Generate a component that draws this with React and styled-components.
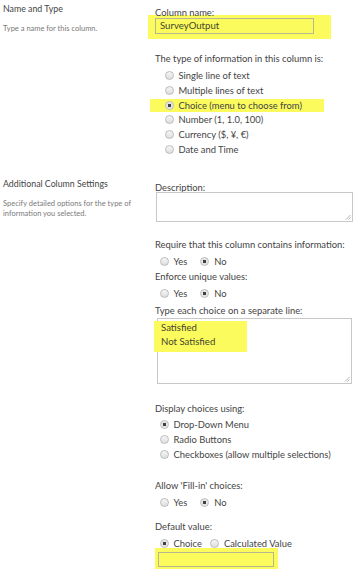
import React from 'react';
import styled, { createGlobalStyle } from 'styled-components';

const GlobalStyle = createGlobalStyle`
  html, body {
    margin: 0;
    padding: 0;
    background: #ffffff;
  }
  body {
    font-family: 'Lato', 'Liberation Sans', sans-serif;
    color: #444;
  }
`;

const Page = styled.div`
  width: 361px;
  height: 583px;
  padding-top: 3px;
  box-sizing: border-box;
  overflow: hidden;
`;

const Section = styled.div`
  display: grid;
  grid-template-columns: 155px 1fr;
  margin-top: ${(p) => p.$gap || 0}px;
`;

const Aside = styled.div`
  padding-left: 3px;
`;

const AsideTitle = styled.div`
  font-size: 8.8px;
  line-height: 11px;
  color: #444;
`;

const AsideText = styled.div`
  margin-top: 10px;
  font-size: 7.5px;
  line-height: 10px;
  color: #7a7a7a;
  width: 140px;
`;

const Fields = styled.div`
  padding-top: 4px;
  font-size: 9.4px;
`;

const Label = styled.div`
  line-height: ${(p) => p.$line || 16}px;
  margin-top: ${(p) => p.$top || 0}px;
  white-space: nowrap;
`;

const Marker = styled.div`
  background: #fbfb5e;
  width: fit-content;
`;

const NameMarker = styled(Marker)`
  margin: -3px 0 -5px -7px;
  padding: 3px 17px 5px 7px;
`;

const TextBox = styled.div`
  box-sizing: border-box;
  width: ${(p) => p.$w}px;
  height: ${(p) => p.$h}px;
  border: 1px solid #b8b890;
  padding: 0 4px;
  font-size: 9.6px;
  line-height: ${(p) => p.$h - 2}px;
  color: #45452c;
`;

const RadioList = styled.div`
  margin-top: ${(p) => p.$top || 0}px;
  padding-left: ${(p) => p.$indent}px;
`;

const RadioRow = styled.div`
  display: flex;
  align-items: center;
  height: ${(p) => p.$h}px;
  white-space: nowrap;
`;

const ChoiceMarker = styled(Marker)`
  display: flex;
  align-items: center;
  height: 13px;
  margin: 1px 0 1px -14.5px;
  padding: 0 22px 0 14.5px;
  white-space: nowrap;
`;

const InlineRow = styled.div`
  display: flex;
  align-items: center;
  height: 16px;
  padding-left: 4.5px;
  white-space: nowrap;
`;

const Option = styled.span`
  display: inline-flex;
  align-items: center;
  margin-right: ${(p) => p.$gap || 13}px;
`;

const Radio = styled.span`
  display: inline-block;
  box-sizing: border-box;
  width: 9px;
  height: 9px;
  border-radius: 50%;
  border: 1px solid #bcbcbc;
  background: ${(p) =>
    p.$on
      ? 'radial-gradient(circle, #404040 0 1.5px, #e2e2e2 2px, #f4f4f4 100%)'
      : 'linear-gradient(#f6f6f6, #dedede)'};
  margin-right: 5px;
  flex-shrink: 0;
`;

const Area = styled.div`
  position: relative;
  box-sizing: border-box;
  width: ${(p) => p.$w}px;
  height: ${(p) => p.$h}px;
  margin-top: ${(p) => p.$top || 0}px;
  margin-left: ${(p) => p.$left || 0}px;
  border: 1px solid #c8c8c8;
  background: #fff;
`;

const Grip = styled.svg`
  position: absolute;
  right: 1px;
  bottom: 1px;
  width: 6px;
  height: 6px;
`;

const AreaMarker = styled(Marker)`
  margin: 2px 0 0 -4px;
  padding: 0 0 3px 7px;
  width: 86px;
  font-size: 9.6px;
  line-height: 14px;
  color: #45452c;
`;

const DefaultMarker = styled(Marker)`
  margin: -3px 0 0 0;
  padding: 4px 4px 2px 3px;
`;

const ResizeGrip = () => (
  <Grip viewBox="0 0 6 6">
    <path d="M5.5 1 L1 5.5 M5.5 3.5 L3.5 5.5" stroke="#a0a0a0" strokeWidth="0.8" fill="none" />
  </Grip>
);

const App = () => (
  <>
    <GlobalStyle />
    <Page>
      <Section>
        <Aside>
          <AsideTitle>Name and Type</AsideTitle>
          <AsideText>Type a name for this column.</AsideText>
        </Aside>
        <Fields>
          <Label $line={11}>Column name:</Label>
          <NameMarker>
            <TextBox $w={159} $h={16}>SurveyOutput</TextBox>
          </NameMarker>
          <Label $line={11} $top={19}>The type of information in this column is:</Label>
          <RadioList $top={4.5} $indent={9.5}>
            <RadioRow $h={14.6}><Radio />Single line of text</RadioRow>
            <RadioRow $h={14.6}><Radio />Multiple lines of text</RadioRow>
            <ChoiceMarker><Radio $on />Choice (menu to choose from)</ChoiceMarker>
            <RadioRow $h={14.6}><Radio />Number (1, 1.0, 100)</RadioRow>
            <RadioRow $h={14.6}><Radio />Currency ($, ¥, €)</RadioRow>
            <RadioRow $h={14.6}><Radio />Date and Time</RadioRow>
          </RadioList>
        </Fields>
      </Section>

      <Section $gap={21.4}>
        <Aside>
          <AsideTitle>Additional Column Settings</AsideTitle>
          <AsideText>Specify detailed options for the type of information you selected.</AsideText>
        </Aside>
        <Fields>
          <Label $line={11}>Description:</Label>
          <Area $w={197} $h={30} $top={-0.5} $left={1}>
            <ResizeGrip />
          </Area>
          <Label $top={15}>Require that this column contains information:</Label>
          <InlineRow>
            <Option><Radio />Yes</Option>
            <Option><Radio $on />No</Option>
          </InlineRow>
          <Label>Enforce unique values:</Label>
          <InlineRow>
            <Option><Radio />Yes</Option>
            <Option><Radio $on />No</Option>
          </InlineRow>
          <Label $top={2}>Type each choice on a separate line:</Label>
          <Area $w={195} $h={66} $top={-1} $left={2}>
            <AreaMarker>
              Satisfied
              <br />
              Not Satisfied
            </AreaMarker>
            <ResizeGrip />
          </Area>
          <Label $top={17}>Display choices using:</Label>
          <RadioList $indent={4.5}>
            <RadioRow $h={15}><Radio $on />Drop-Down Menu</RadioRow>
            <RadioRow $h={15}><Radio />Radio Buttons</RadioRow>
            <RadioRow $h={15}><Radio />Checkboxes (allow multiple selections)</RadioRow>
          </RadioList>
          <Label $top={16}>Allow 'Fill-in' choices:</Label>
          <InlineRow>
            <Option><Radio />Yes</Option>
            <Option><Radio $on />No</Option>
          </InlineRow>
          <Label $top={9}>Default value:</Label>
          <InlineRow>
            <Option $gap={8}><Radio $on />Choice</Option>
            <Option><Radio />Calculated Value</Option>
          </InlineRow>
          <DefaultMarker>
            <TextBox $w={116} $h={15} />
          </DefaultMarker>
        </Fields>
      </Section>
    </Page>
  </>
);

export default App;
